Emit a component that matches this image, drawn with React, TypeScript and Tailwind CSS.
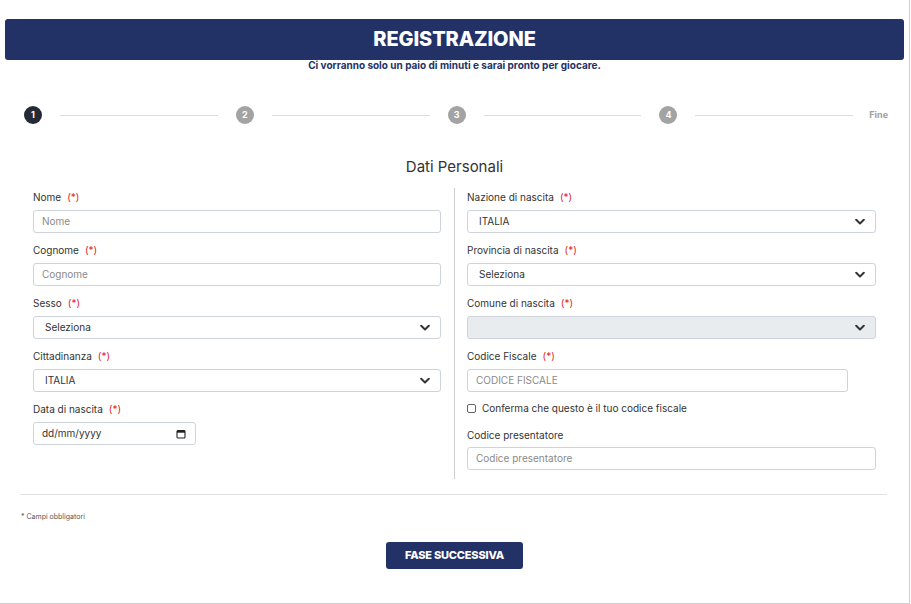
import React from "react";

const font = { fontFamily: "Inter, 'Liberation Sans', sans-serif" };

function Chevron() {
  return (
    <svg width="10" height="7" viewBox="0 0 10 7" className="absolute right-[10px] top-1/2 -translate-y-1/2">
      <path d="M1.2 1.3 L5 5 L8.8 1.3" fill="none" stroke="#333" strokeWidth="2" strokeLinecap="round" strokeLinejoin="round" />
    </svg>
  );
}

function Label({ text, req = true }: { text: string; req?: boolean }) {
  return (
    <div className="h-[14px] flex items-center text-[10px] text-[#333] leading-[14px]">
      <span>{text}</span>
      {req && <span className="ml-[6px] text-[#e0262b]">(*)</span>}
    </div>
  );
}

function TextInput({ placeholder, w = "w-full" }: { placeholder: string; w?: string }) {
  return (
    <div className={`${w} h-[23px] border border-[#ced4da] rounded-[3px] bg-white flex items-center pl-[8px] text-[10px] text-[#8a8a8a]`}>
      {placeholder}
    </div>
  );
}

function Select({ value, disabled = false, pl = "pl-[11px]" }: { value: string; disabled?: boolean; pl?: string }) {
  return (
    <div
      className={`relative w-full h-[23px] border border-[#ced4da] rounded-[3px] flex items-center ${pl} text-[10px] text-[#333] ${
        disabled ? "bg-[#e9ecef]" : "bg-white"
      }`}
    >
      {value}
      <Chevron />
    </div>
  );
}

function Step({ n, active = false }: { n: number; active?: boolean }) {
  return (
    <div
      className={`w-[18px] h-[18px] rounded-full flex items-center justify-center text-white text-[9px] font-bold shrink-0 ${
        active ? "bg-[#262a35]" : "bg-[#a3a3a3]"
      }`}
    >
      {n}
    </div>
  );
}

function Line({ last = false }: { last?: boolean }) {
  return <div className={`flex-1 h-px bg-[#dcdcdc] ml-[18px] ${last ? "mr-[16px]" : "mr-[18px]"}`} />;
}

export default function App() {
  return (
    <div className="w-[910px] h-[604px] bg-white border-r border-b border-[#cfcfcf] flex flex-col" style={font}>
      <div className="mt-[19px] mx-[5px] h-[41px] bg-[#233266] rounded-[3px] flex items-center justify-center">
        <span className="text-white font-extrabold text-[20px] tracking-[-0.1px] -mt-[1px]">REGISTRAZIONE</span>
      </div>
      <div className="text-center text-[10px] font-bold text-[#233266] leading-[14px] -mt-[2px]">
        Ci vorranno solo un paio di minuti e sarai pronto per giocare.
      </div>

      <div className="mt-[34px] ml-[24px] mr-[21px] flex items-center h-[18px]">
        <Step n={1} active />
        <Line />
        <Step n={2} />
        <Line />
        <Step n={3} />
        <Line />
        <Step n={4} />
        <Line last />
        <span className="text-[9px] font-bold text-[#a0a0a0]">Fine</span>
      </div>

      <div className="mt-[33px] text-center text-[15px] text-[#333] leading-[20px]">Dati Personali</div>

      <div className="mt-[11px] mx-[33px] flex">
        <div className="w-[421px] pr-[13px] pt-[2px]">
          <Label text="Nome" />
          <div className="mt-[6px]"><TextInput placeholder="Nome" /></div>
          <div className="mt-[10px]"><Label text="Cognome" /></div>
          <div className="mt-[6px]"><TextInput placeholder="Cognome" /></div>
          <div className="mt-[10px]"><Label text="Sesso" /></div>
          <div className="mt-[6px]"><Select value="Seleziona" /></div>
          <div className="mt-[10px]"><Label text="Cittadinanza" /></div>
          <div className="mt-[6px]"><Select value="ITALIA" /></div>
          <div className="mt-[10px]"><Label text="Data di nascita" /></div>
          <div className="mt-[6px] w-[163px] h-[23px] border border-[#ced4da] rounded-[3px] flex items-center justify-between pl-[8px] pr-[9px] text-[10px] text-[#333]">
            <span>dd/mm/yyyy</span>
            <svg width="10" height="10" viewBox="0 0 10 10">
              <rect x="1" y="1.5" width="8" height="7.5" rx="1" fill="none" stroke="#222" strokeWidth="1.1" />
              <rect x="1" y="1.5" width="8" height="2.2" fill="#222" />
            </svg>
          </div>
        </div>
        <div className="flex-1 border-l border-[#cfcfcf] pl-[12px] pt-[2px] pb-[9px]">
          <Label text="Nazione di nascita" />
          <div className="mt-[6px]"><Select value="ITALIA" /></div>
          <div className="mt-[10px]"><Label text="Provincia di nascita" /></div>
          <div className="mt-[6px]"><Select value="Seleziona" /></div>
          <div className="mt-[10px]"><Label text="Comune di nascita" /></div>
          <div className="mt-[6px]"><Select value="" disabled /></div>
          <div className="mt-[10px]"><Label text="Codice Fiscale" /></div>
          <div className="mt-[6px]"><TextInput placeholder="CODICE FISCALE" w="w-[381px]" /></div>
          <div className="mt-[9px] h-[14px] flex items-center text-[10px] text-[#333]">
            <div className="w-[9px] h-[9px] border border-[#666] rounded-[2px] bg-white mr-[6px]" />
            <span>Conferma che questo è il tuo codice fiscale</span>
          </div>
          <div className="mt-[13px]"><Label text="Codice presentatore" req={false} /></div>
          <div className="mt-[5px]"><TextInput placeholder="Codice presentatore" /></div>
        </div>
      </div>

      <div className="mt-[15px] ml-[20px] mr-[22px] h-px bg-[#e2e2e2]" />
      <div className="mt-[17px] ml-[21px] text-[7px] text-[#555] leading-[10px]">* Campi obbligatori</div>
      <div className="mt-[20px] flex justify-center">
        <div className="w-[137px] h-[27px] bg-[#233266] rounded-[3px] flex items-center justify-center text-white text-[11px] font-extrabold tracking-[-0.2px]">
          FASE SUCCESSIVA
        </div>
      </div>
    </div>
  );
}
